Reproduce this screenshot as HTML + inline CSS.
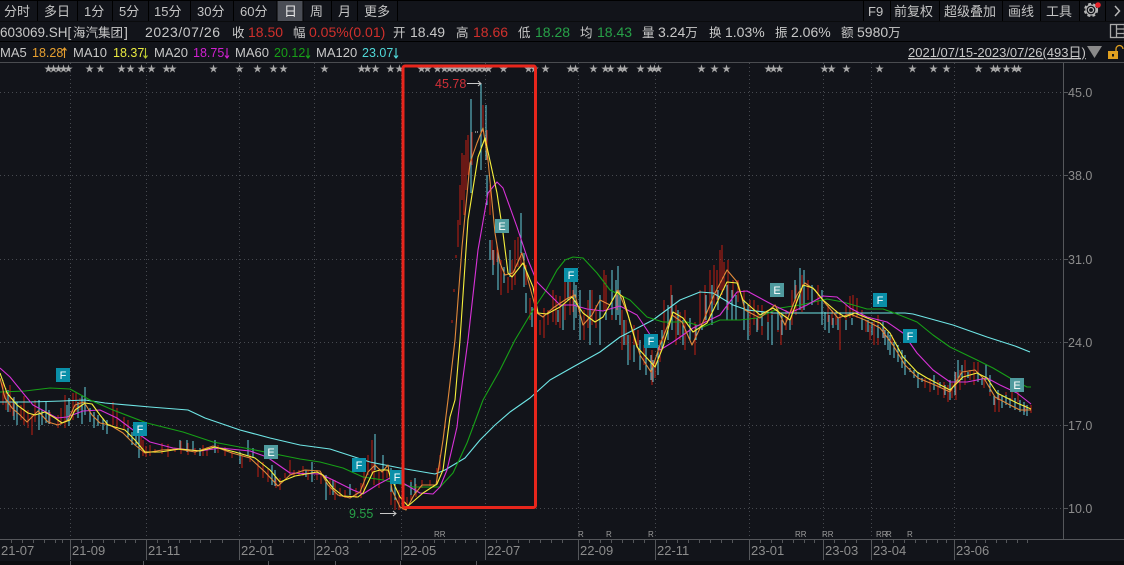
<!DOCTYPE html>
<html><head><meta charset="utf-8"><style>
html,body{margin:0;padding:0;background:#12141a;width:1124px;height:565px;overflow:hidden}
svg{display:block}
text{font-family:"Liberation Sans","Noto Sans CJK SC",sans-serif;white-space:pre}
.w{fill:#c8c8c8}.r{fill:#d0302c}.g{fill:#27a148}
.c{font-size:12.5px}
.tb text{font-size:13px;fill:#c4c4c4}
.y text{font-size:12.5px;fill:#8c8c8c}
.d text{font-size:13px;fill:#8c8c8c}
.bd text{font-size:11px;fill:#fff;text-anchor:middle}
.rr text{font-size:8px;fill:#9a9a9a}
</style></head><body>
<svg width="1124" height="565" viewBox="0 0 1124 565" xmlns="http://www.w3.org/2000/svg">
<rect width="1124" height="565" fill="#12141a"/>
<rect width="1124" height="1" fill="#000"/>
<rect x="277" y="1" width="26" height="20" fill="#4a4d55"/>
<path d="M37.500 1V21M77.500 1V21M112.500 1V21M148.500 1V21M190.500 1V21M233.500 1V21M277 1V21M303 1V21M331.500 1V21M357.500 1V21M397.500 1V21M863.500 1V21M890.500 1V21M939.500 1V21M1002.500 1V21M1040.500 1V21M1079.500 1V21M1105.500 1V21" stroke="#000" stroke-width="1"/>
<rect y="41" width="1124" height="1" fill="#000"/>
<rect y="21" width="1124" height="1" fill="#0a0b0d"/>
<rect y="62" width="1124" height="1" fill="#4a4c50"/>
<g class="tb">
<text x="4" y="16">分时</text><text x="44" y="16">多日</text><text x="84" y="16">1分</text><text x="119" y="16">5分</text><text x="154" y="16">15分</text><text x="197" y="16">30分</text><text x="240" y="16">60分</text><text x="284" y="16" style="fill:#e8e8e8">日</text><text x="310" y="16">周</text><text x="338" y="16">月</text><text x="364" y="16">更多</text>
<text x="868" y="16">F9</text><text x="894" y="16">前复权</text><text x="944" y="16">超级叠加</text><text x="1008" y="16">画线</text><text x="1046" y="16">工具</text>
</g>
<g fill="none" stroke="#b8b8b8"><circle cx="1091" cy="10" r="2.500" stroke-width="1.200"/><circle cx="1091" cy="10" r="5" stroke-width="1.200"/><circle cx="1091" cy="10" r="6.300" stroke-width="1.600" stroke-dasharray="3 2.300"/><path d="M1115 6l4.500 5-4.500 5" stroke-width="1.500"/></g>
<circle cx="1098" cy="5" r="2.800" fill="#e8232a"/>
<g fill="none" stroke="#a8a8a8" stroke-width="1.300"><rect x="1110.500" y="24.500" width="14" height="13"/><path d="M1116.500 24.500V37.500M1116.500 29h8M1116.500 33.500h8"/></g>
<g font-size="14">
<text class="w" x="0" y="37" style="font-size:13.5px">603069.SH[</text><text class="w c" x="73" y="37">海汽集团</text><text class="w" x="124" y="37">]</text>
<text class="w" x="145" y="37" textLength="75" lengthAdjust="spacing">2023/07/26</text>
<text class="w c" x="232" y="37">收</text><text class="r" x="248" y="37">18.50</text>
<text class="w c" x="293" y="37">幅</text><text class="r" x="309" y="37">0.05%(0.01)</text>
<text class="w c" x="393" y="37">开</text><text class="w" x="410" y="37">18.49</text>
<text class="w c" x="456" y="37">高</text><text class="r" x="473" y="37">18.66</text>
<text class="w c" x="518" y="37">低</text><text class="g" x="535" y="37">18.28</text>
<text class="w c" x="580" y="37">均</text><text class="g" x="597" y="37">18.43</text>
<text class="w c" x="642" y="37">量</text><text class="w" x="658" y="37">3.24<tspan class="c">万</tspan></text>
<text class="w c" x="709" y="37">换</text><text class="w" x="725" y="37">1.03%</text>
<text class="w c" x="775" y="37">振</text><text class="w" x="791" y="37">2.06%</text>
<text class="w c" x="841" y="37">额</text><text class="w" x="857" y="37">5980<tspan class="c">万</tspan></text>
</g>
<g font-size="13">
<text class="w" x="0" y="57">MA5</text><text x="32" y="57" fill="#e8a030" font-size="12.500">18.28</text>
<text class="w" x="73" y="57">MA10</text><text x="113" y="57" fill="#e8e840" font-size="12.500">18.37</text>
<text class="w" x="154" y="57">MA20</text><text x="193" y="57" fill="#d020d0" font-size="12.500">18.75</text>
<text class="w" x="235" y="57">MA60</text><text x="274" y="57" fill="#18a018" font-size="12.500">20.12</text>
<text class="w" x="316" y="57">MA120</text><text x="362" y="57" fill="#50d8d8" font-size="12.500">23.07</text>
<text class="w" x="908" y="57" text-decoration="underline">2021/07/15-2023/07/26(493日)</text>
</g>
<g fill="none" stroke-width="1.100">
<path d="M64.500 48V58M62.500 50.500l2-2.500 2 2.500" stroke="#e8a030"/>
<path d="M145.500 48V58M143.500 55.500l2 2.500 2-2.500" stroke="#b8c830"/>
<path d="M227 48V58M225 55.500l2 2.500 2-2.500" stroke="#d020d0"/>
<path d="M308 48V58M306 55.500l2 2.500 2-2.500" stroke="#18a018"/>
<path d="M396 48V58M394 55.500l2 2.500 2-2.500" stroke="#50d8d8"/>
</g>
<path d="M1087 46h15l-7.500 12z" fill="#8a8a8a"/>
<rect x="1108" y="51" width="10" height="8" fill="#e0a020"/><rect x="1112" y="54" width="2" height="2.500" fill="#12141a"/>
<path d="M1116 51v-2a3.500 3.500 0 0 1 7 0" fill="none" stroke="#e0a020" stroke-width="1.300"/>
<g fill="#a8a8a8" font-size="9" style="font-family:'DejaVu Sans',sans-serif">
<text y="72" x="44 49 54 59 64 85 96 117 126 137 147 162 168 209 235 253 269 279 320 357 363 371 386 395 417 423 433 440 445 450 455 460 465 470 475 480 484 499 524 530 541 566 571 589 601 606 616 620 636 646 650 654 697 710 722 764 769 775 820 827 842 875 908 929 942 974 989 993 1002 1010 1014">★★★★★★★★★★★★★★★★★★★★★★★★★★★★★★★★★★★★★★★★★★★★★★★★★★★★★★★★★★★★★★★★★★★★★★★</text>
</g>
<g fill="none" stroke="#474a50" stroke-width="1" stroke-dasharray="1 3">
<path d="M0 92.500H1063M0 175.500H1063M0 259.500H1063M0 342.500H1063M0 425.500H1063M0 508.500H1063"/>
<path d="M70.500 63V539M146.500 63V539M239.500 63V539M314.500 63V539M401.500 63V539M485.500 63V539M578.500 63V539M655.500 63V539M749.500 63V539M823.500 63V539M871.500 63V539M954.500 63V539"/>
</g>
<path d="M1063.500 63V539M1063 92.500h5M1063 175.500h5M1063 259.500h5M1063 342.500h5M1063 425.500h5M1063 508.500h5" stroke="#55575b" fill="none"/>
<g class="y"><text x="1068" y="97">45.0</text><text x="1068" y="180">38.0</text><text x="1068" y="264">31.0</text><text x="1068" y="347">24.0</text><text x="1068" y="430">17.0</text><text x="1068" y="513">10.0</text></g>
<rect y="539" width="1124" height="1" fill="#55575b"/>
<rect y="561" width="1124" height="4" fill="#0b0c0f"/>
<path d="M70.500 539V560M146.500 539V560M239.500 539V560M314.500 539V560M401.500 539V560M485.500 539V560M578.500 539V560M655.500 539V560M749.500 539V560M823.500 539V560M871.500 539V560M954.500 539V560" stroke="#55575b"/>
<path d="M11.500 539v4M22.500 539v4M33.500 539v4M44.500 539v4M55.500 539v4M62.500 539v4M81.500 539v4M92.500 539v4M103.500 539v4M114.500 539v4M125.500 539v4M135.500 539v4M157.500 539v4M168.500 539v4M179.500 539v4M190.500 539v4M200.500 539v4M210.500 539v4M222.500 539v4M250.500 539v4M261.500 539v4M272.500 539v4M283.500 539v4M293.500 539v4M304.500 539v4M325.500 539v4M336.500 539v4M347.500 539v4M358.500 539v4M369.500 539v4M380.500 539v4M391.500 539v4M412.500 539v4M423.500 539v4M434.500 539v4M444.500 539v4M455.500 539v4M465.500 539v4M476.500 539v4M496.500 539v4M507.500 539v4M518.500 539v4M529.500 539v4M540.500 539v4M551.500 539v4M562.500 539v4M589.500 539v4M600.500 539v4M611.500 539v4M622.500 539v4M633.500 539v4M644.500 539v4M666.500 539v4M677.500 539v4M688.500 539v4M699.500 539v4M710.500 539v4M721.500 539v4M732.500 539v4M760.500 539v4M771.500 539v4M782.500 539v4M793.500 539v4M804.500 539v4M814.500 539v4M834.500 539v4M845.500 539v4M856.500 539v4M882.500 539v4M893.500 539v4M904.500 539v4M915.500 539v4M926.500 539v4M937.500 539v4M946.500 539v4M965.500 539v4M976.500 539v4M985.500 539v4M996.500 539v4M1006.500 539v4M1017.500 539v4M1027.500 539v4" stroke="#55575b"/>
<path d="M70.500 561v4M143.500 561v4M268.500 561v4M335.500 561v4M400.500 561v4M476.500 561v4" stroke="#55575b"/>
<g class="d"><text x="1" y="555">21-07</text><text x="72" y="555">21-09</text><text x="148" y="555">21-11</text><text x="241" y="555">22-01</text><text x="316" y="555">22-03</text><text x="403" y="555">22-05</text><text x="487" y="555">22-07</text><text x="580" y="555">22-09</text><text x="657" y="555">22-11</text><text x="751" y="555">23-01</text><text x="825" y="555">23-03</text><text x="873" y="555">23-04</text><text x="956" y="555">23-06</text></g>
<g class="rr"><text x="434" y="537">RR</text><text x="578" y="537">R</text><text x="606" y="537">R</text><text x="648" y="537">R</text><text x="795" y="537">RR</text><text x="822" y="537">RR</text><text x="876" y="537">RR</text><text x="886" y="537">R</text><text x="907" y="537">R</text></g>
<!-- red candles -->
<path fill="none" stroke="#c21e12" stroke-width="1" shape-rendering="crispEdges" d="M3 380V405M6 388V410M10 385V412M13 398V416M21 405V420M24 396V425M28 410V428M32 414V435M35 400V422M50 412V424M58 415V428M61 408V425M65 395V428M73 393V420M76 392V412M80 398V410M113 402V425M117 408V428M124 417V430M128 420V436M141 428V450M143 440V456M146 446V457M150 445V456M155 449V453M162 443V454M168 444V457M175 450V452M181 441V454M188 443V455M195 448V455M203 445V456M207 447V456M212 446V450M218 445V453M225 447V456M232 452V458M242 455V468M250 454V462M258 460V477M263 462V478M268 468V482M276 477V488M280 478V490M285 473V478M290 460V475M294 470V476M299 470V476M303 466V476M308 470V480M317 470V480M321 472V484M330 478V495M335 480V500M340 488V497M345 490V498M350 489V497M356 488V498M361 483V498M364 470V492M368 455V475M372 440V475M374 462V485M379 468V488M383 462V480M387 470V478M391 478V505M395 490V510M399 490V510M403 495V510M407 497V508M411 480V500M416 484V497M422 480V488M430 480V486M437 468V482M440 455V470M445 425V428M452 320V323M454 289V292M456 255V258M458 220V247M460 185V225M462 153V200M464 155V215M466 140V190M468 135V175M472 132V165M483 105V132M487 130V160M490 185V215M492 240V260M494 250V265M497 245V262M501 260V295M508 277V293M512 260V290M515 240V285M518 237V267M521 230V265M526 265V285M530 298V320M540 320V335M544 308V338M548 310V325M553 290V322M556 295V325M560 296V328M565 280V320M570 282V315M573 290V312M580 305V330M584 310V340M588 300V328M592 290V325M596 305V328M600 320V335M604 270V310M606 275V310M612 300V320M617 290V310M622 310V350M626 320V345M630 335V360M634 325V352M638 330V345M644 345V365M652 350V385M655 360V378M660 340V362M664 300V345M668 310V335M671 285V320M676 305V345M680 312V340M685 310V350M695 322V355M700 290V325M705 285V322M710 270V320M714 265V305M717 270V300M720 250V290M722 245V295M724 262V290M728 260V310M733 280V298M738 280V302M744 290V330M750 300V335M754 300V325M758 305V330M762 305V335M768 310V335M772 310V335M778 318V332M781 320V345M786 310V330M792 290V325M796 285V315M802 275V312M808 280V300M812 285V300M818 285V305M822 300V315M828 305V322M832 310V325M836 310V325M840 312V350M846 305V328M850 296V318M853 295V317M857 298V318M862 310V320M866 320V332M870 325V340M874 320V345M878 315V345M884 328V338M892 335V345M905 365V375M918 375V385M925 378V388M930 378V392M938 380V395M944 382V398M948 385V402M952 383V398M956 372V400M960 370V390M965 360V385M970 370V380M974 362V385M978 362V380M984 380V388M990 390V396M995 398V412M999 395V412M1006 392V405M1012 388V400M1018 392V402M1025 405V412M1031 405V413"/>
<!-- cyan candles -->
<path fill="none" stroke="#66d0de" stroke-width="1" shape-rendering="crispEdges" d="M8 390V412M14 397V420M17 402V425M39 400V430M42 410V425M46 402V423M49 410V424M67 405V420M69 398V426M78 402V418M82 395V424M85 387V415M90 408V422M94 412V428M98 415V426M103 418V430M107 420V434M128 428V438M132 432V445M136 430V445M139 436V458M180 440V450M187 440V452M193 441V450M200 448V456M215 440V453M240 452V464M248 440V456M253 448V458M272 465V485M275 470V486M306 470V477M312 462V482M326 475V500M333 480V495M350 484V495M375 434V470M383 455V470M391 468V492M395 475V500M411 482V495M415 478V494M471 99V193M481 84V170M486 105V160M487 175V205M490 240V260M493 250V275M498 250V290M504 267V283M510 250V277M521 213V253M524 253V287M526 293V313M532 307V327M536 310V330M558 310V322M563 305V330M568 280V300M574 268V330M576 285V318M580 290V340M590 290V345M600 295V345M606 310V320M612 270V315M616 280V320M618 266V315M620 290V325M624 320V345M628 335V365M634 345V362M640 340V370M646 345V375M651 355V380M653 360V382M658 345V375M662 330V350M668 305V340M672 295V330M678 310V335M683 320V345M690 318V340M696 325V340M702 325V330M706 295V320M712 285V325M718 290V310M727 285V320M732 290V320M736 295V320M744 300V330M748 305V340M757 318V332M762 312V326M768 322V340M772 315V345M778 310V330M782 315V335M790 320V330M795 280V300M800 268V310M804 270V310M812 285V305M822 290V312M822 308V325M825 312V330M829 315V333M833 318V328M838 318V330M846 320V330M852 318V325M862 318V330M868 320V332M872 322V335M878 325V338M883 322V338M885 330V345M888 332V350M890 335V355M894 342V358M898 345V362M902 350V368M905 355V375M910 368V372M914 370V378M918 372V388M922 378V382M934 375V390M940 382V388M945 385V395M950 380V400M955 372V395M958 360V382M962 365V380M968 372V378M978 372V382M982 378V385M986 365V380M990 375V392M994 395V405M998 390V400M1002 395V408M1006 395V405M1010 398V408M1015 398V410M1020 400V412M1024 402V415M1027 405V416"/>
<!-- MAs -->
<g fill="none" stroke-width="1.100" stroke-linejoin="round">
<polyline stroke="#6fe6e6" points="0,402 30,402 62,401 85,400 105,403 150,407 188,410 205,418 240,430 270,438 300,445 330,449 370,462 400,468 435,474 445,470 465,458 480,440 495,425 510,412 530,398 550,380 573,367 600,352 620,337 653,320 680,300 700,292 713,293 733,305 747,310 773,313 820,313 880,313 905,313 913,314 953,325 987,337 1015,346 1030,352"/>
<polyline stroke="#17a017" points="0,392 25,391 50,388 70,389 90,400 113,410 147,423 183,432 213,442 250,449 300,459 320,462 343,468 363,477 383,480 413,487 440,487 453,473 467,443 483,400 500,370 515,340 533,310 545,292 557,270 565,260 573,257 583,258 597,273 610,290 630,300 647,317 663,322 687,322 703,327 720,320 740,320 757,318 780,308 800,305 827,299 843,302 867,309 883,309 897,314 917,322 933,335 950,347 977,360 993,368 1010,378 1027,387 1031,387"/>
<polyline stroke="#d832d8" points="0,368 10,377 23,393 33,405 57,418 67,417 83,411 100,410 117,418 133,430 150,442 173,448 200,451 220,448 250,451 267,457 290,473 320,474 333,480 353,490 363,494 377,485 390,478 403,483 420,493 433,494 440,487 447,470 457,427 460,400 468,340 478,250 488,193 497,182 503,188 517,227 528,260 537,282 547,292 560,305 573,305 587,309 603,311 620,306 637,315 647,330 660,350 673,342 693,328 720,315 737,292 747,291 760,298 773,305 790,313 807,305 823,296 837,297 850,308 867,317 887,322 903,333 917,353 933,370 950,382 967,382 987,378 1000,385 1017,393 1031,404"/>
<polyline stroke="#e08a3a" points="0,378 5,398 12,408 20,415 27,422 38,411 48,422 58,425 68,420 75,405 84,402 92,415 100,423 110,425 123,433 135,445 145,453 162,450 178,449 195,452 213,446 232,453 250,458 265,472 278,486 290,475 305,470 320,471 328,485 338,495 350,498 360,492 368,472 375,465 382,472 388,465 392,490 400,507 406,510 414,495 422,485 436,485 443,440 448,400 455,340 462,247 470,163 477,143 483,128 488,160 495,233 500,263 505,275 513,273 522,253 528,280 537,313 543,317 553,308 568,298 575,295 583,325 592,315 600,300 610,305 618,290 628,315 640,355 651,372 660,345 672,315 682,322 692,345 703,322 714,295 727,270 738,283 745,310 760,318 775,305 785,325 797,295 805,283 815,290 825,303 838,318 850,314 865,320 880,328 893,345 905,365 918,378 935,385 950,392 962,372 975,370 985,380 995,397 1010,405 1020,410 1031,410"/>
<polyline stroke="#f6f03c" points="0,373 7,393 17,405 28,413 35,415 45,412 55,418 62,423 70,420 75,410 85,403 92,404 100,415 108,425 125,430 135,440 145,452 160,452 180,449 200,451 215,447 235,452 255,458 270,470 280,482 295,476 317,472 323,475 333,488 343,496 358,497 363,493 373,472 380,470 388,470 392,480 400,497 408,506 423,493 437,484 443,470 450,417 455,400 460,340 468,220 478,157 485,138 497,193 503,233 508,273 512,277 523,263 533,287 538,313 547,314 560,307 572,297 583,313 595,322 603,317 617,292 623,297 637,347 655,367 663,347 673,312 683,318 693,332 707,323 727,282 737,283 743,300 760,315 773,308 790,320 803,285 813,288 823,300 837,312 845,317 855,313 867,318 880,323 890,333 903,357 917,372 927,378 950,390 963,377 977,373 987,378 997,393 1017,403 1031,409"/>
</g>
<!-- annotations -->
<text x="435" y="88" font-size="12.500" fill="#d03038">45.78</text>
<path d="M467 83.500H481M478 81l3 2.500-3 2.500" fill="none" stroke="#c8c8c8"/>
<path d="M475 132h4" stroke="#eee" stroke-dasharray="1 1"/>
<text x="349" y="518" font-size="12.500" fill="#27a148">9.55</text>
<path d="M380 513.500H396M393 511l3 2.500-3 2.500" fill="none" stroke="#c8c8c8"/>
<!-- badges -->
<g class="bd">
<rect x="56" y="368" width="14" height="14" fill="#0a8fa8"/><text x="63" y="379">F</text>
<rect x="133" y="422" width="14" height="14" fill="#0a8fa8"/><text x="140" y="433">F</text>
<rect x="264" y="445" width="14" height="14" fill="#4f9a9e"/><text x="271" y="456">E</text>
<rect x="352" y="458" width="14" height="14" fill="#0a8fa8"/><text x="359" y="469">F</text>
<rect x="390" y="470" width="14" height="14" fill="#0a8fa8"/><text x="397" y="481">F</text>
<rect x="495" y="219" width="14" height="14" fill="#4f9a9e"/><text x="502" y="230">E</text>
<rect x="564" y="268" width="14" height="14" fill="#0a8fa8"/><text x="571" y="279">F</text>
<rect x="644" y="334" width="14" height="14" fill="#0a8fa8"/><text x="651" y="345">F</text>
<rect x="770" y="283" width="14" height="14" fill="#4f9a9e"/><text x="777" y="294">E</text>
<rect x="873" y="293" width="14" height="14" fill="#0a8fa8"/><text x="880" y="304">F</text>
<rect x="903" y="329" width="14" height="14" fill="#0a8fa8"/><text x="910" y="340">F</text>
<rect x="1010" y="378" width="14" height="14" fill="#4f9a9e"/><text x="1017" y="389">E</text>
</g>
<!-- red highlight box -->
<rect x="403" y="66" width="132.500" height="441.500" rx="2" fill="none" stroke="#e8261c" stroke-width="3"/>
</svg>
</body></html>
